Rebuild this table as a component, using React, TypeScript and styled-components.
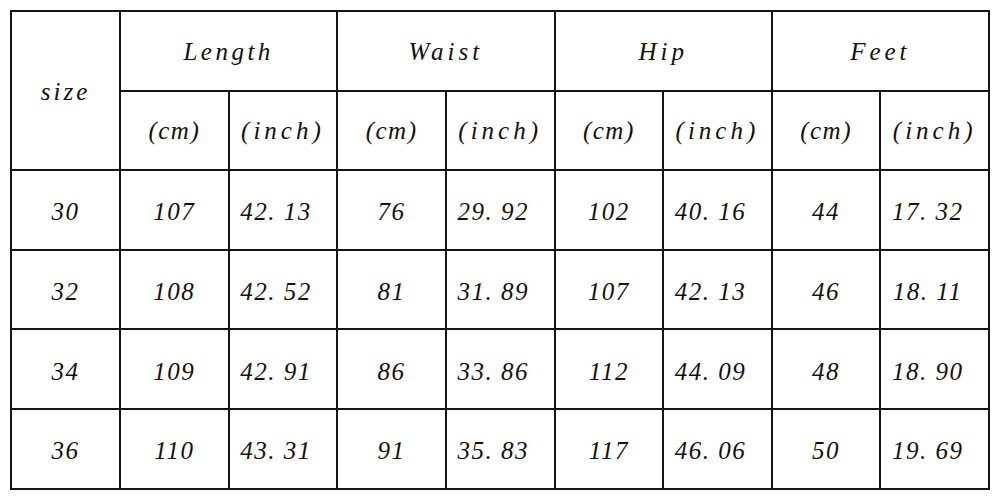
import React from "react";
import styled, { createGlobalStyle, css } from "styled-components";

const Global = createGlobalStyle`
  html, body { margin: 0; padding: 0; background: #fff; }
  body { font-family: "Liberation Serif", "DejaVu Serif", serif; }
`;

const Page = styled.div`
  padding: 10px 0 0 10px;
  width: 1000px;
  height: 499px;
  box-sizing: border-box;
  background: #fff;
`;

const Table = styled.table`
  border-collapse: collapse;
  table-layout: fixed;
  width: 980px;
`;

const SizeCol = styled.col`
  width: 109px;
`;

const Row = styled.tr`
  height: 79.6px;
`;

const cellBase = css`
  border: 2px solid #151515;
  padding: 2px 0 0 0;
  text-align: center;
  vertical-align: middle;
  font-family: "Liberation Serif", "DejaVu Serif", serif;
  font-style: italic;
  font-weight: 400;
  font-size: 25px;
  color: #111;
`;

const HeadCell = styled.th<{ $spacing: number }>`
  ${cellBase};
  letter-spacing: ${(p) => p.$spacing}px;
`;

const DataCell = styled.td<{ $decimal?: boolean }>`
  ${cellBase};
  padding-top: 5px;
  letter-spacing: 1.5px;
  padding-right: ${(p) => (p.$decimal ? "14px" : "0")};
`;

const groups = [
  { name: "Length", spacing: 3.5 },
  { name: "Waist", spacing: 4 },
  { name: "Hip", spacing: 4 },
  { name: "Feet", spacing: 4 },
];
const rows = [
  ["30", "107", "42. 13", "76", "29. 92", "102", "40. 16", "44", "17. 32"],
  ["32", "108", "42. 52", "81", "31. 89", "107", "42. 13", "46", "18. 11"],
  ["34", "109", "42. 91", "86", "33. 86", "112", "44. 09", "48", "18. 90"],
  ["36", "110", "43. 31", "91", "35. 83", "117", "46. 06", "50", "19. 69"],
];

export default function App() {
  return (
    <Page>
      <Global />
      <Table>
        <colgroup>
          <SizeCol />
          {Array.from({ length: 8 }).map((_, i) => (
            <col key={i} />
          ))}
        </colgroup>
        <tbody>
          <Row>
            <HeadCell $spacing={3} rowSpan={2}>
              size
            </HeadCell>
            {groups.map((g) => (
              <HeadCell $spacing={g.spacing} colSpan={2} key={g.name}>
                {g.name}
              </HeadCell>
            ))}
          </Row>
          <Row>
            {groups.map((g) => (
              <React.Fragment key={g.name}>
                <HeadCell $spacing={1.5}>(cm)</HeadCell>
                <HeadCell $spacing={4}>(inch)</HeadCell>
              </React.Fragment>
            ))}
          </Row>
          {rows.map((r) => (
            <Row key={r[0]}>
              {r.map((v, i) => (
                <DataCell key={i} $decimal={v.includes(".")}>
                  {v}
                </DataCell>
              ))}
            </Row>
          ))}
        </tbody>
      </Table>
    </Page>
  );
}
